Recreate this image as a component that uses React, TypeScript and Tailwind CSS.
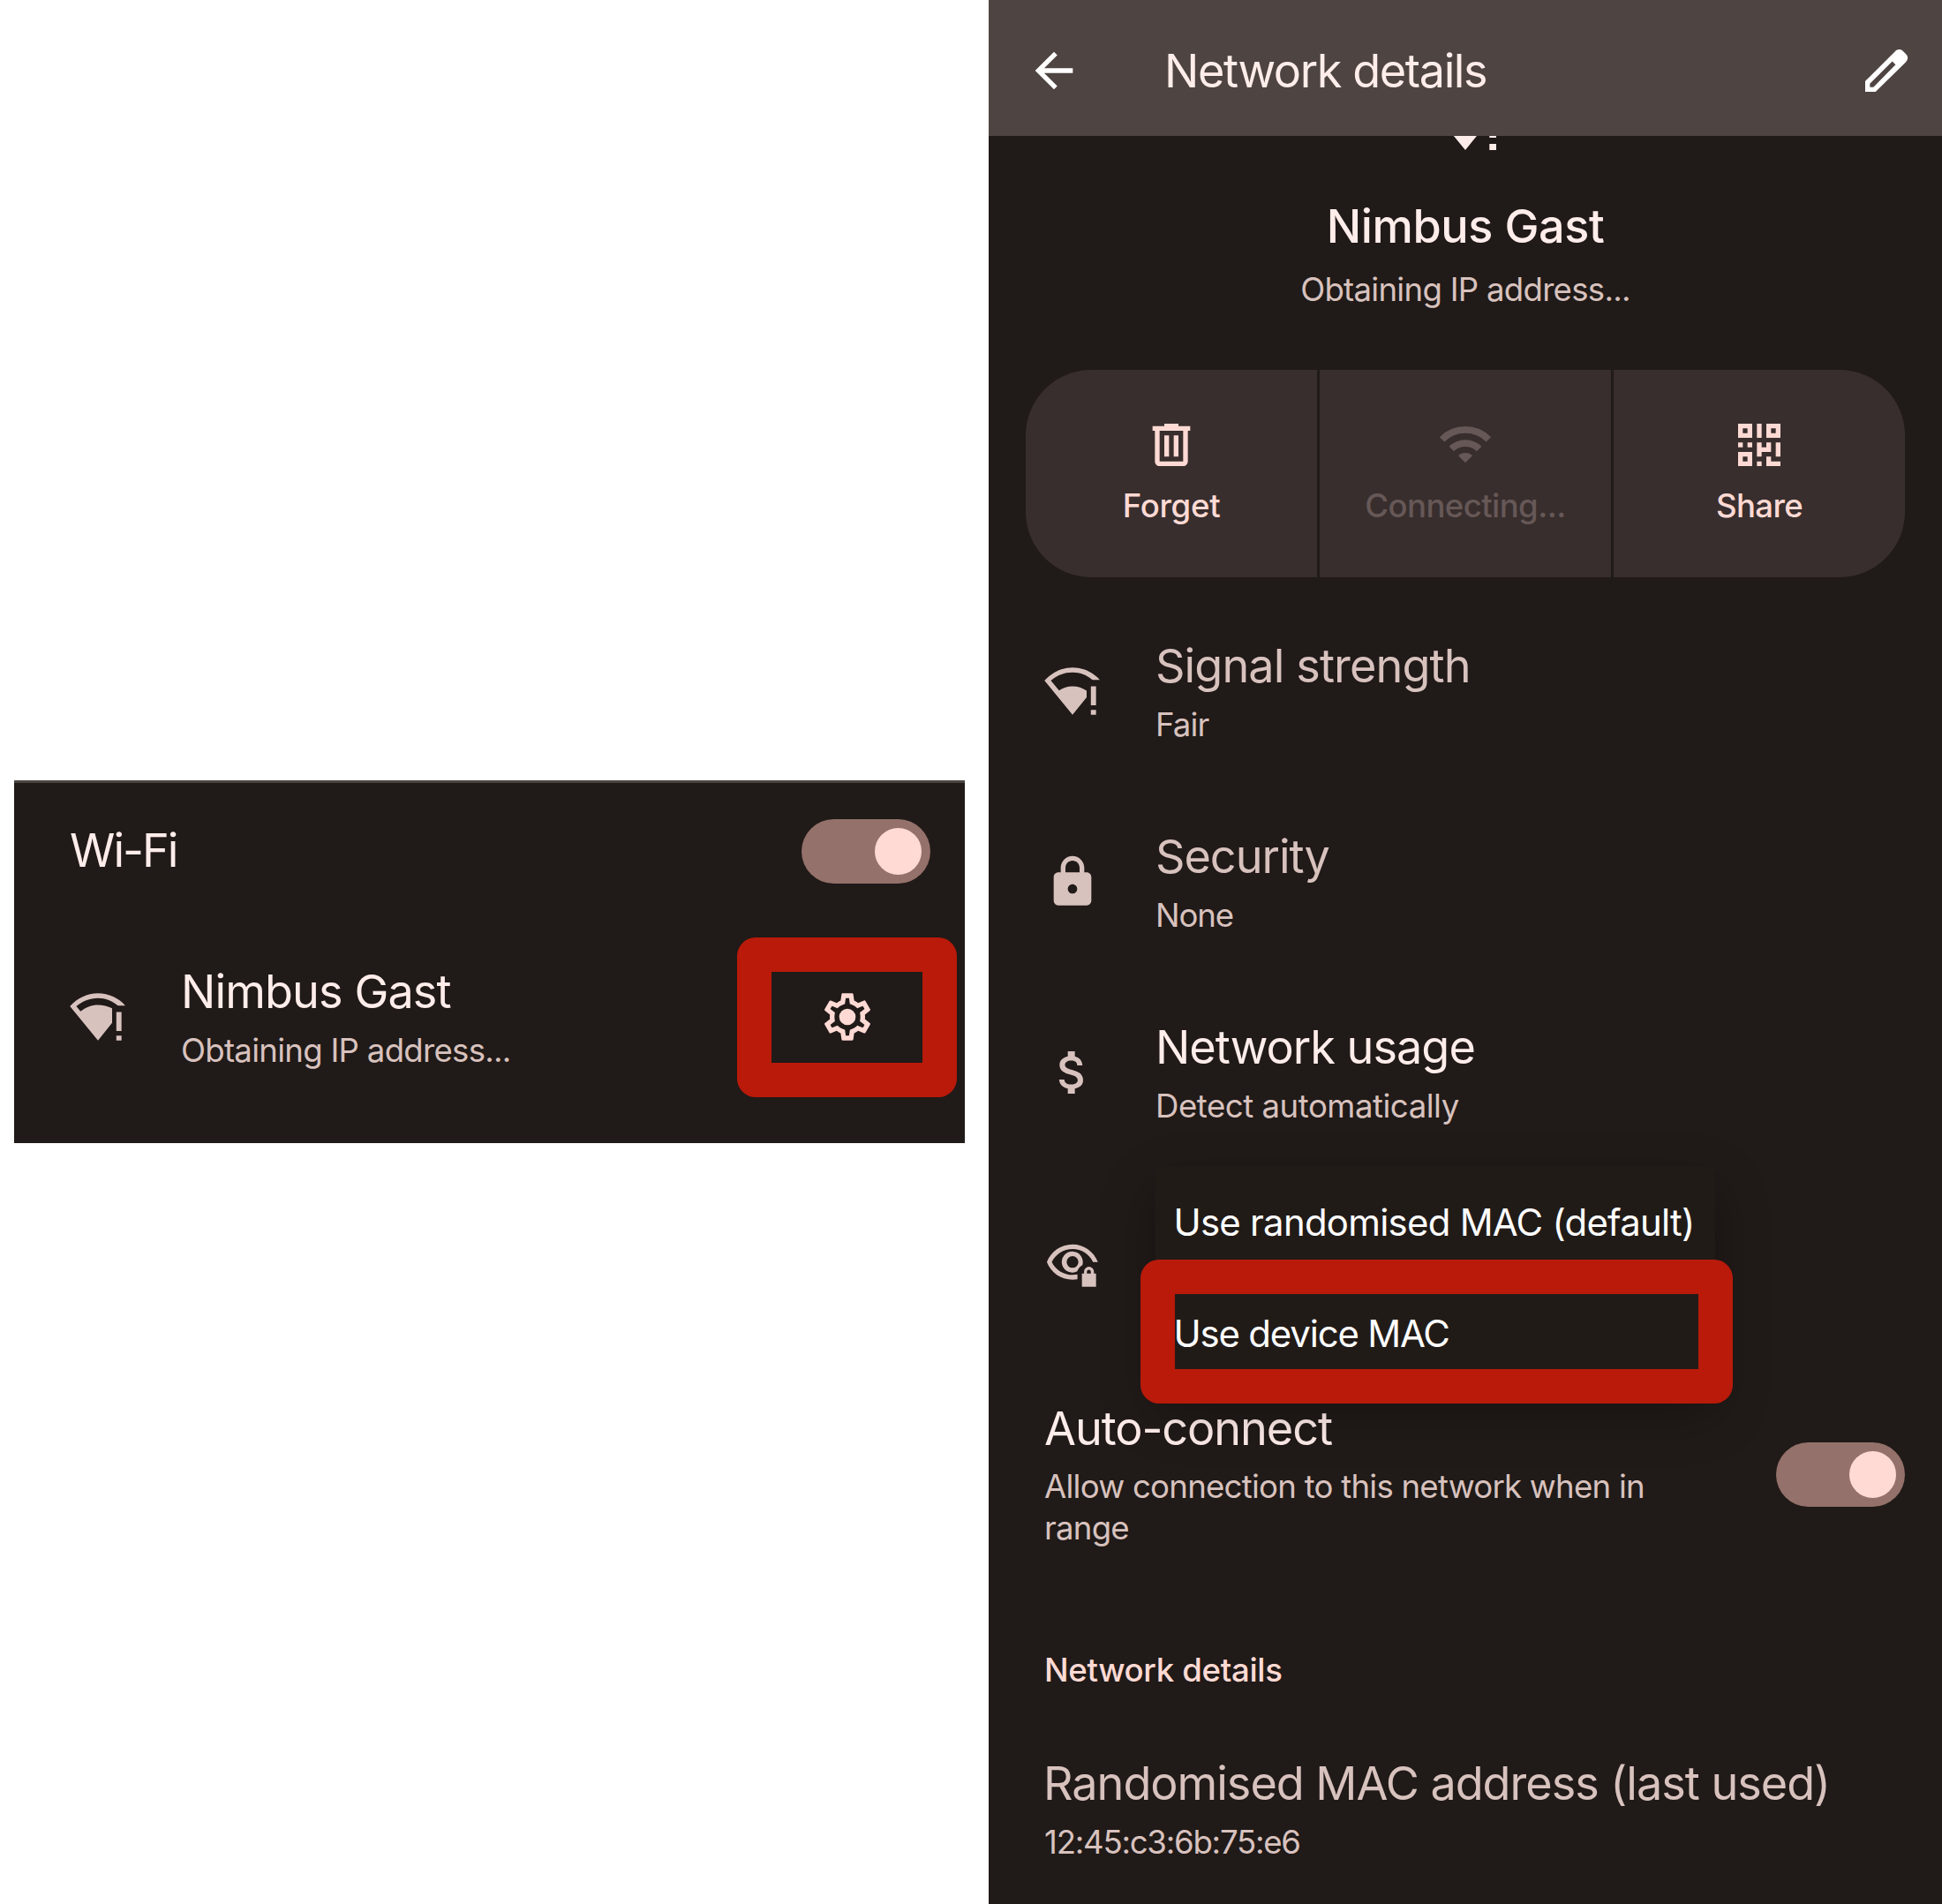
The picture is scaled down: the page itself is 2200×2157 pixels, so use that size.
import type { ReactNode } from 'react';

function Icon({ className = 'size-16', children }: { className?: string; children: ReactNode }) {
  return (
    <svg viewBox="0 0 24 24" fill="currentColor" className={`shrink-0 ${className}`}>
      {children}
    </svg>
  );
}

const WIFI_ALERT_FAIR =
  'M.1 7.5C3.2 4.1 7.4 2 12 2c4.6 0 8.7 2 11.6 5.2h-3.1C18.1 5.2 15.2 4 12 4 8.5 4 5.3 5.3 2.8 7.5l3.5 4.2C7.9 10.6 9.9 9.9 12 9.9c2.2 0 4.3.7 6 1.9v2.8L12 22z';
const WIFI_ALERT_GOOD =
  'M.1 7.5C3.2 4.1 7.4 2 12 2c4.6 0 8.7 2 11.6 5.2h-3.1C18.1 5.2 15.2 4 12 4 8.5 4 5.3 5.3 2.8 7.5l1.8 2.2C6.7 7.9 9.3 6.9 12 6.9c2.1 0 4.2.5 6 1.4v6.2L12 22z';

function WifiAlert({ shape, className }: { shape: string; className?: string }) {
  return (
    <Icon className={className}>
      <path d={shape} />
      <path d="M19.8 9.9H22V18h-2.2zM19.8 20H22v2h-2.2z" />
    </Icon>
  );
}

function BackArrow() {
  return (
    <Icon>
      <path d="M20 11H7.83l5.59-5.59L12 4l-8 8 8 8 1.41-1.41L7.83 13H20v-2z" />
    </Icon>
  );
}

function Pencil() {
  return (
    <Icon>
      <path
        fillRule="evenodd"
        d="M3 21v-4.5L15.6 3.9c1.1-1.1 2.4-1.2 3.4-.2l1.4 1.4c.9 1 .9 2.2-.1 3.2L7.4 21zM5 19h1.5l9.4-9.5-1.4-1.4L5 17.5z"
      />
    </Icon>
  );
}

function Trash() {
  return (
    <Icon>
      <path
        fillRule="evenodd"
        d="M15 4V3H9v1H4v2h1v13c0 1.1.9 2 2 2h10c1.1 0 2-.9 2-2V6h1V4zM7 6h10v13H7zM9 8h2v9H9zM13 8h2v9h-2z"
      />
    </Icon>
  );
}

function Wifi() {
  return (
    <Icon>
      <path d="M2.1 9.7a14 14 0 0 1 19.8 0M6.1 13.7a8.35 8.35 0 0 1 11.8 0" fill="none" stroke="currentColor" strokeWidth="2.9" />
      <path d="M12 19.6l-3-3a4.25 4.25 0 0 1 6 0z" />
    </Icon>
  );
}

function QrCode() {
  return (
    <Icon>
      <path
        fillRule="evenodd"
        d="M3 3h6v6H3zM5 5h2v2H5zM11 3h2v6h-2zM15 3h6v6h-6zM17 5h2v2h-2zM3 11h2v2H3zM7 11h2v2H7zM3 15h6v6H3zM5 17h2v2H5zM11 11h2v2h2v-2h2v4h-4v2h-2zM19 11h2v6h-2zM11 19h2v2h-2zM15 17h2v2h4v2h-6z"
      />
    </Icon>
  );
}

function Lock() {
  return (
    <Icon>
      <path d="M18 8h-1V6c0-2.76-2.24-5-5-5S7 3.24 7 6v2H6c-1.1 0-2 .9-2 2v10c0 1.1.9 2 2 2h12c1.1 0 2-.9 2-2V10c0-1.1-.9-2-2-2zm-6 9c-1.1 0-2-.9-2-2s.9-2 2-2 2 .9 2 2-.9 2-2 2zM9 8V6c0-1.66 1.34-3 3-3s3 1.34 3 3v2H9z" />
    </Icon>
  );
}

function Dollar() {
  return (
    <Icon>
      <path d="M11.8 10.9c-2.27-.59-3-1.2-3-2.15 0-1.09 1.01-1.85 2.7-1.85 1.78 0 2.44.85 2.5 2.1h2.21c-.07-1.72-1.12-3.3-3.21-3.81V3h-3v2.16c-1.94.42-3.5 1.68-3.5 3.61 0 2.31 1.91 3.46 4.7 4.13 2.5.6 3 1.48 3 2.41 0 .69-.49 1.79-2.7 1.79-2.06 0-2.87-.92-2.98-2.1h-2.2c.12 2.19 1.76 3.42 3.68 3.83V21h3v-2.15c1.95-.37 3.5-1.5 3.5-3.55 0-2.84-2.43-3.81-4.7-4.4z" />
    </Icon>
  );
}

function PrivacyEye() {
  return (
    <Icon>
      <path d="M1.1 11.5C2.8 7.1 7 4 12 4c4.9 0 9 3 10.8 7.5h-2.1C19.2 8.2 15.8 6 12 6c-3.8 0-7.2 2.2-8.8 5.5C4.8 14.8 8.2 17 12 17c.7 0 1.4-.1 2.1-.2v2c-.7.1-1.4.2-2.1.2-5 0-9.200-3.100-10.900-7.500z" />
      <path fillRule="evenodd" d="M12 7a4.500 4.500 0 1 0 2 8.500c.3-1 1-2.100 2.200-2.700A4.500 4.500 0 0 0 12 7zM12 9a2.500 2.500 0 1 1 0 5 2.500 2.500 0 0 1 0-5z" />
      <path fillRule="evenodd" d="M16 16.400h.9v-.8a2.100 2.100 0 0 1 4.200 0v.8h.9V22h-6zM18.100 16.400h1.700v-.7a.85.85 0 0 0-1.700 0z" />
    </Icon>
  );
}

function Gear() {
  return (
    <Icon>
      <path d="M19.430 12.980c.04-.32.07-.64.07-.98 0-.34-.03-.66-.07-.98l2.110-1.650c.19-.15.24-.42.12-.64l-2-3.460a.5.5 0 0 0-.61-.22l-2.490 1c-.52-.4-1.080-.73-1.690-.98l-.38-2.650A.488.488 0 0 0 14 2h-4c-.25 0-.46.18-.49.42l-.38 2.650c-.61.25-1.170.59-1.690.98l-2.490-1a.566.566 0 0 0-.18-.03c-.17 0-.34.09-.43.25l-2 3.460c-.13.22-.07.49.12.64l2.110 1.650c-.04.32-.07.65-.07.98 0 .33.03.66.07.98l-2.110 1.650c-.19.15-.24.42-.12.64l2 3.460a.5.5 0 0 0 .61.22l2.490-1c.52.4 1.080.73 1.690.98l.38 2.650c.03.24.24.42.49.42h4c.25 0 .46-.18.49-.42l.38-2.650c.61-.25 1.170-.59 1.690-.98l2.490 1c.06.02.12.03.18.03.17 0 .34-.09.43-.25l2-3.460c.12-.22.07-.49-.12-.64l-2.110-1.650zm-1.980-1.710c.04.31.05.52.05.73 0 .21-.02.43-.05.73l-.14 1.130.89.7 1.080.84-.7 1.210-1.270-.51-1.040-.42-.9.68c-.43.32-.84.56-1.250.73l-1.060.43-.16 1.130-.2 1.350h-1.400l-.19-1.350-.16-1.130-1.060-.43c-.43-.18-.83-.41-1.230-.71l-.91-.7-1.060.43-1.270.51-.7-1.210 1.080-.84.89-.7-.14-1.130c-.03-.31-.05-.54-.05-.74s.02-.43.05-.73l.14-1.130-.89-.7-1.080-.84.7-1.210 1.270.51 1.040.42.9-.68c.43-.32.84-.56 1.250-.73l1.060-.43.16-1.130.2-1.350h1.390l.19 1.350.16 1.130 1.060.43c.43.18.83.41 1.230.71l.91.7 1.060-.43 1.270-.51.7 1.210-1.070.85-.89.7.14 1.130z" />
      <circle cx="12" cy="12" r="3.5" />
    </Icon>
  );
}

function Toggle() {
  return (
    <div className="flex h-[73px] w-[146px] shrink-0 items-center justify-end rounded-full bg-[#94716a] pr-[10px]">
      <div className="size-[53px] rounded-full bg-[#ffdad4]" />
    </div>
  );
}

const TITLE = 'block whitespace-nowrap text-[52.2px] leading-[64px]';
const SUB = 'block whitespace-nowrap text-[36.6px] leading-[48px] text-[#d8c2be]';

function Row({ icon, children }: { icon: ReactNode; children?: ReactNode }) {
  return (
    <div className="flex h-[216px] items-center gap-[62.5px] pl-[62.5px] text-[#d8c2be]">
      {icon}
      <div className="flex flex-col gap-[11px]">{children}</div>
    </div>
  );
}

function Action({ icon, children, className }: { icon: ReactNode; children: ReactNode; className: string }) {
  return (
    <div
      className={`flex h-[235px] flex-1 flex-col items-center gap-[13px] bg-[#382e2d] pt-[53px] text-[36.6px] leading-[48px] font-medium ${className}`}
    >
      {icon}
      {children}
    </div>
  );
}

function WifiCard() {
  return (
    <section className="mt-[884px] ml-4 h-[411px] w-[1077px] border-t-[3px] border-[#4b4542] bg-[#201a18]">
      <div className="flex items-center justify-between pt-[41px] pr-[39px] pl-[63px]">
        <span className={`${TITLE} pb-[3px] tracking-[-2px] text-[#ffedea]`}>Wi-Fi</span>
        <Toggle />
      </div>
      <div className="mt-[43px] flex items-center justify-between pr-[9px]">
        <Row icon={<WifiAlert shape={WIFI_ALERT_GOOD} />}>
          <span className={`${TITLE} tracking-[-0.9px] text-[#ffedea]`}>Nimbus Gast</span>
          <span className={`${SUB} tracking-[-0.72px]`}>Obtaining IP address...</span>
        </Row>
        <div className="flex h-[181px] w-[249px] items-center justify-center rounded-[21px] border-[39px] border-[#b91a0a] text-[#ffdad4]">
          <Gear />
        </div>
      </div>
    </section>
  );
}

function MacMenu() {
  return (
    <div className="absolute top-[-1px] left-[189px] flex w-[634px] flex-col bg-[#211b18] pl-[20.500px] text-[41.9px] text-white shadow-[0_24px_56px_rgba(0,0,0,0.28)]">
      <span className="h-[126px] leading-[126px] tracking-[-0.73px] whitespace-nowrap">Use randomised MAC (default)</span>
      <span className="h-[126px] leading-[126px] tracking-[-1.16px] whitespace-nowrap">Use device MAC</span>
      <div className="absolute top-[105px] left-[-17.500px] h-[163px] w-[671px] rounded-[21px] border-[39px] border-[#b91a0a]" />
    </div>
  );
}

function DetailsScreen() {
  return (
    <section className="flex h-[2157px] w-[1080px] flex-col overflow-hidden bg-[#201a18]">
      <header className="z-10 flex h-[154px] shrink-0 items-center bg-[#4e4442] pr-[31px] pb-[-6px] pl-[42px] text-white">
        <div className="mt-[6px] flex flex-1 items-center">
          <BackArrow />
          <h1 className={`${TITLE} ml-[93px] font-normal tracking-[-1.4px] text-[#ffedea]`}>Network details</h1>
          <div className="ml-auto">
            <Pencil />
          </div>
        </div>
      </header>

      <div className="-mt-[61px] flex flex-col items-center text-[#ffedea]">
        <WifiAlert shape={WIFI_ALERT_FAIR} className="size-[84px]" />
        <h2 className={`${TITLE} mt-[47px] font-medium tracking-[-0.41px]`}>Nimbus Gast</h2>
        <p className={`${SUB} mt-4 tracking-[-0.72px]`}>Obtaining IP address...</p>
      </div>

      <div className="mx-[42px] mt-[67px] flex gap-[3px] text-[#ffdad4]">
        <Action icon={<Trash />} className="rounded-l-[74px] tracking-[-0.3px]">
          Forget
        </Action>
        <Action icon={<Wifi />} className="tracking-[-0.6px] text-[#665857]">
          Connecting...
        </Action>
        <Action icon={<QrCode />} className="rounded-r-[74px] tracking-[-0.63px]">
          Share
        </Action>
      </div>

      <div className="mt-[21px]">
        <Row icon={<WifiAlert shape={WIFI_ALERT_FAIR} />}>
          <span className={`${TITLE} tracking-[-0.9px]`}>Signal strength</span>
          <span className={`${SUB} tracking-[-0.83px]`}>Fair</span>
        </Row>
        <Row icon={<Lock />}>
          <span className={`${TITLE} tracking-[-1.03px]`}>Security</span>
          <span className={`${SUB} tracking-[-1.09px]`}>None</span>
        </Row>
        <Row icon={<Dollar />}>
          <span className={`${TITLE} tracking-[-0.98px] text-[#ffedea]`}>Network usage</span>
          <span className={`${SUB} tracking-[-0.47px]`}>Detect automatically</span>
        </Row>
        <div className="relative z-10">
          <Row icon={<PrivacyEye />} />
          <MacMenu />
        </div>
      </div>

      <div className="mt-[47px] flex items-center justify-between pr-[42px] pl-[63px]">
        <div className="flex flex-col gap-[11px]">
          <span className={`${TITLE} tracking-[-1.07px] text-[#ffedea]`}>Auto-connect</span>
          <p className="w-[700px] text-[36.6px] leading-[47px] tracking-[-0.75px] text-[#d8c2be]">
            Allow connection to this network when in range
          </p>
        </div>
        <Toggle />
      </div>

      <h3 className="mt-[113px] pl-[63px] text-[36.6px] leading-[48px] font-medium tracking-[-0.33px] text-[#ffdad4]">
        Network details
      </h3>
      <div className="mt-[72px] flex flex-col gap-[11px] pl-[62px] text-[#d8c2be]">
        <span className={`${TITLE} tracking-[-1.03px]`}>Randomised MAC address (last used)</span>
        <span className={`${SUB} pl-px tracking-[-1.24px]`}>12:45:c3:6b:75:e6</span>
      </div>
    </section>
  );
}

export default function App() {
  return (
    <main className="flex h-[2157px] w-[2200px] items-start justify-between overflow-hidden bg-white font-['Inter',sans-serif]">
      <WifiCard />
      <DetailsScreen />
    </main>
  );
}
